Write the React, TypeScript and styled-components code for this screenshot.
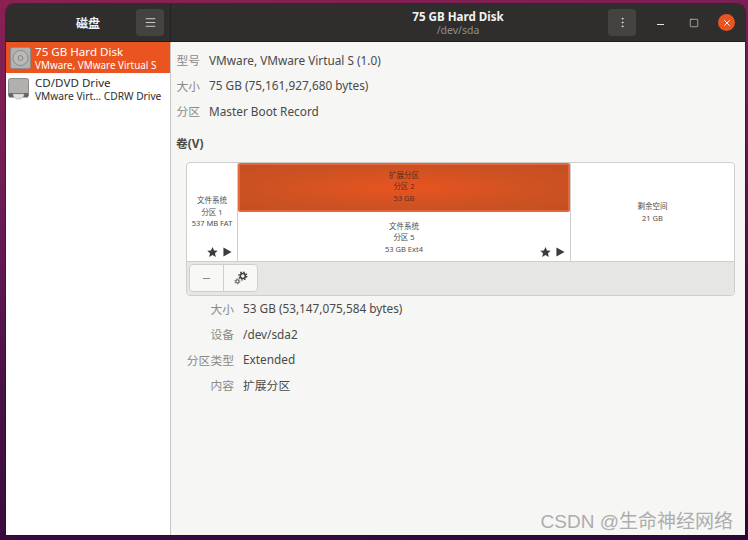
import styled, { createGlobalStyle } from "styled-components";
import { Menu, MoreVertical, Minus, Square, X } from "lucide-react";

const GlobalStyle = createGlobalStyle`
  html, body {
    margin: 0;
    padding: 0;
    height: 100%;
  }
  body {
    width: 748px;
    height: 540px;
    overflow: hidden;
    font-family: "Noto Sans", "Noto Sans CJK SC", sans-serif;
    background: linear-gradient(172deg, #8a2152 0%, #6e1c55 30%, #4a1048 60%, #2c0838 100%);
  }
`;

const Desktop = styled.div`
  position: relative;
  box-sizing: border-box;
  width: 748px;
  height: 540px;
  padding: 4px 3px 5px 6px;
`;

const Window = styled.div`
  width: 100%;
  height: 100%;
  display: flex;
  flex-direction: column;
  border-radius: 8px 8px 0 0;
  overflow: hidden;
  box-shadow: 0 0 0 1px rgba(30, 10, 30, 0.45);
`;

const TitleBar = styled.header`
  flex: 0 0 38px;
  box-sizing: border-box;
  display: flex;
  background: #2f2e2c;
  border-bottom: 1px solid #1c1b1a;
`;

const SideHeader = styled.div`
  flex: 0 0 165px;
  box-sizing: border-box;
  display: grid;
  grid-template-columns: 1fr auto 1fr;
  align-items: center;
  padding-right: 6px;
  padding-left: 6px;
  border-right: 1px solid #242322;
`;

const SideTitle = styled.div`
  grid-column: 2;
  color: #f2f2f2;
  font-size: 12px;
  font-weight: 700;
`;

const HeaderButton = styled.div`
  width: 28px;
  height: 27px;
  display: flex;
  align-items: center;
  justify-content: center;
  border-radius: 4px;
  background: #444341;
  color: #e6e6e6;
`;

const SideMenuButton = styled(HeaderButton)`
  grid-column: 3;
  justify-self: end;
`;

const MainHeader = styled.div`
  flex: 1;
  display: grid;
  grid-template-columns: 1fr auto 1fr;
  align-items: center;
  padding: 0 10px;
`;

const TitleBlock = styled.div`
  grid-column: 2;
  padding-top: 1px;
  display: flex;
  flex-direction: column;
  align-items: center;
`;

const WindowTitle = styled.div`
  color: #f2f2f2;
  font-size: 11.6px;
  line-height: 14px;
  font-weight: 700;
`;

const WindowSubtitle = styled.div`
  color: #8f8e8c;
  font-size: 10.5px;
  line-height: 13px;
`;

const WindowControls = styled.div`
  grid-column: 3;
  justify-self: end;
  display: flex;
  align-items: center;
  gap: 16px;
`;

const ControlIcon = styled.div`
  width: 17px;
  height: 17px;
  display: flex;
  align-items: center;
  justify-content: center;
  color: #e6e6e6;
`;

const CloseButton = styled(ControlIcon)`
  border-radius: 50%;
  background: #e95420;
  color: #fff;
`;

const Body = styled.div`
  flex: 1;
  display: flex;
  min-height: 0;
`;

const Sidebar = styled.nav`
  flex: 0 0 165px;
  box-sizing: border-box;
  background: #fff;
  border-right: 1px solid #c8c6c4;
`;

const DriveRow = styled.div<{ $selected?: boolean }>`
  height: 31px;
  display: flex;
  align-items: center;
  gap: ${(p) => (p.$selected ? "4px" : "6px")};
  padding-left: ${(p) => (p.$selected ? "4px" : "2px")};
  background: ${(p) => (p.$selected ? "#e95420" : "#fff")};
  color: ${(p) => (p.$selected ? "#fff" : "#2d2d2d")};
`;

const DriveText = styled.div`
  min-width: 0;
  white-space: nowrap;
  padding-top: 1px;
`;

const DriveName = styled.div`
  font-size: 11.6px;
  line-height: 14px;
`;

const DriveInfo = styled.div<{ $selected?: boolean }>`
  font-size: ${(p) => (p.$selected ? "9.9px" : "10.2px")};
  line-height: 13px;
`;

const Content = styled.main`
  flex: 1;
  min-width: 0;
  display: flex;
  flex-direction: column;
  background: #f6f6f5;
  color: #3d3d3d;
  padding: 5px 10px 0 5px;
`;

const InfoGrid = styled.dl<{ $labelWidth: number; $indent?: number }>`
  margin: 0;
  margin-left: ${(p) => p.$indent ?? 0}px;
  display: grid;
  grid-template-columns: ${(p) => p.$labelWidth}px 1fr;
  column-gap: 9px;
  grid-auto-rows: 25.5px;
  align-items: center;
  font-size: 11.8px;
`;

const InfoLabel = styled.dt`
  margin: 0;
  text-align: right;
  color: #8a8a88;
`;

const InfoValue = styled.dd`
  margin: 0;
  color: #4a4a48;
  white-space: nowrap;
`;

const SectionTitle = styled.h2`
  margin: 9px 0;
  font-size: 11.8px;
  line-height: 20px;
  font-weight: 700;
  color: #4a4a48;
`;

const VolumeBox = styled.section`
  margin-left: 10px;
  height: 134px;
  box-sizing: border-box;
  display: flex;
  flex-direction: column;
  border: 1px solid #cfcecc;
  border-radius: 4px;
  overflow: hidden;
  background: #fff;
`;

const PartitionMap = styled.div`
  flex: 0 0 98px;
  display: flex;
  border-bottom: 1px solid #cfcecc;
`;

const PartitionColumn = styled.div<{ $width?: number; $last?: boolean }>`
  flex: ${(p) => (p.$width ? `0 0 ${p.$width}px` : "1")};
  display: flex;
  flex-direction: column;
  box-sizing: border-box;
  border-right: ${(p) => (p.$last ? "none" : "1px solid #cfcecc")};
`;

const Partition = styled.div`
  position: relative;
  flex: 1;
  display: flex;
  flex-direction: column;
  align-items: center;
  justify-content: center;
  padding-top: 2px;
  font-size: 7.5px;
  line-height: 11.5px;
  color: #4e4e4c;
`;

const ExtendedPartition = styled(Partition)`
  flex: 0 0 49px;
  box-sizing: border-box;
  padding-top: 0;
  color: #5a3020;
  border: 2px solid #e2673b;
  border-radius: 2px;
  background: radial-gradient(ellipse at center, #e95420 0%, #cf5222 55%, #c44f22 100%);
`;

const LowerPartition = styled(Partition)`
  padding-top: 4px;
`;

const Flags = styled.div`
  position: absolute;
  right: 5px;
  bottom: 4px;
  display: flex;
  align-items: center;
  gap: 5px;
  color: #3c3c3c;
`;

const Toolbar = styled.div`
  flex: 1;
  display: flex;
  align-items: center;
  padding-left: 2px;
  background: #e6e6e5;
`;

const ToolGroup = styled.div`
  display: flex;
  height: 28px;
  box-sizing: border-box;
  border: 1px solid #cfcecc;
  border-radius: 4px;
  background: #f8f8f7;
`;

const ToolButton = styled.div<{ $divided?: boolean }>`
  width: 33px;
  display: flex;
  align-items: center;
  justify-content: center;
  color: #3f3f3d;
  border-left: ${(p) => (p.$divided ? "1px solid #cfcecc" : "none")};
`;

const Watermark = styled.div`
  position: absolute;
  right: 15px;
  bottom: 7px;
  font-family: "Liberation Sans", "Noto Sans CJK SC", sans-serif;
  font-size: 19px;
  line-height: 22px;
  color: #adadad;
`;

function DiskIcon() {
  return (
    <svg width="21" height="22" viewBox="0 0 21 22">
      <rect x="0.5" y="0.5" width="20" height="21" rx="2" fill="#b4b2b0" stroke="#8e8c8a" />
      <circle cx="10.5" cy="11" r="7.5" fill="#bcbab8" stroke="#8a8886" strokeWidth="1" />
      <circle cx="10.5" cy="11" r="2.4" fill="none" stroke="#858381" strokeWidth="1" />
    </svg>
  );
}

function OpticalIcon() {
  return (
    <svg width="21" height="22" viewBox="0 0 21 22">
      <path d="M2.500 0.500h16a2 2 0 0 1 2 2v14a2 2 0 0 1-2 2h-16a2 2 0 0 1-2-2v-14a2 2 0 0 1 2-2z" fill="#b2b0ae" stroke="#8e8c8a" />
      <rect x="0.500" y="15" width="20" height="4.500" rx="1.500" fill="#666462" />
      <path d="M5 16a5.500 5 0 0 0 11 0z" fill="#e4e2e0" stroke="#bdbbb9" strokeWidth="0.5" />
      <path d="M7.500 20.500h6" stroke="#cfcdcb" strokeWidth="1.500" />
    </svg>
  );
}

function MinimizeLine() {
  return (
    <svg width="7" height="17" viewBox="0 0 7 17">
      <path d="M0 10.500h7" stroke="currentColor" strokeWidth="1.200" />
    </svg>
  );
}

function GearsIcon() {
  return (
    <svg width="14" height="14" viewBox="0 0 14 14" fill="none">
      <circle cx="8.800" cy="5" r="2.500" stroke="#3f3f3d" strokeWidth="1.500" />
      <circle cx="8.800" cy="5" r="3.900" stroke="#3f3f3d" strokeWidth="1.400" strokeDasharray="1.530 1.530" />
      <circle cx="3.400" cy="10.400" r="1.600" stroke="#5a5a58" strokeWidth="1.100" />
      <circle cx="3.400" cy="10.400" r="2.500" stroke="#5a5a58" strokeWidth="0.900" strokeDasharray="1.310 1.310" />
    </svg>
  );
}

function PartitionFlags() {
  return (
    <Flags>
      <svg width="11" height="10" viewBox="0 0 24 23">
        <path d="M12 0l3.600 8 8.400.8-6.300 5.700 1.900 8.500L12 18.500 4.400 23l1.900-8.500L0 8.800 8.400 8z" fill="currentColor" />
      </svg>
      <svg width="9" height="10" viewBox="0 0 10 11">
        <path d="M0.500 0.500L9.500 5.500L0.500 10.500z" fill="currentColor" />
      </svg>
    </Flags>
  );
}

export default function App() {
  return (
    <>
      <GlobalStyle />
      <Desktop>
        <Window>
          <TitleBar>
            <SideHeader>
              <SideTitle>磁盘</SideTitle>
              <SideMenuButton>
                <Menu size={13} strokeWidth={1.5} />
              </SideMenuButton>
            </SideHeader>
            <MainHeader>
              <TitleBlock>
                <WindowTitle>75 GB Hard Disk</WindowTitle>
                <WindowSubtitle>/dev/sda</WindowSubtitle>
              </TitleBlock>
              <WindowControls>
                <HeaderButton>
                  <MoreVertical size={13} strokeWidth={1.5} />
                </HeaderButton>
                <ControlIcon>
                  <MinimizeLine />
                </ControlIcon>
                <ControlIcon>
                  <Square size={10} strokeWidth={1.5} />
                </ControlIcon>
                <CloseButton>
                  <X size={10} strokeWidth={2.2} />
                </CloseButton>
              </WindowControls>
            </MainHeader>
          </TitleBar>
          <Body>
            <Sidebar>
              <DriveRow $selected>
                <DiskIcon />
                <DriveText>
                  <DriveName>75 GB Hard Disk</DriveName>
                  <DriveInfo $selected>VMware, VMware Virtual S</DriveInfo>
                </DriveText>
              </DriveRow>
              <DriveRow>
                <OpticalIcon />
                <DriveText>
                  <DriveName>CD/DVD Drive</DriveName>
                  <DriveInfo>VMware Virt… CDRW Drive</DriveInfo>
                </DriveText>
              </DriveRow>
            </Sidebar>
            <Content>
              <InfoGrid $labelWidth={24}>
                <InfoLabel>型号</InfoLabel>
                <InfoValue>VMware, VMware Virtual S (1.0)</InfoValue>
                <InfoLabel>大小</InfoLabel>
                <InfoValue>75 GB (75,161,927,680 bytes)</InfoValue>
                <InfoLabel>分区</InfoLabel>
                <InfoValue>Master Boot Record</InfoValue>
              </InfoGrid>
              <SectionTitle>卷(V)</SectionTitle>
              <VolumeBox>
                <PartitionMap>
                  <PartitionColumn $width={51}>
                    <Partition>
                      <span>文件系统</span>
                      <span>分区 1</span>
                      <span>537 MB FAT</span>
                      <PartitionFlags />
                    </Partition>
                  </PartitionColumn>
                  <PartitionColumn $width={333}>
                    <ExtendedPartition>
                      <span>扩展分区</span>
                      <span>分区 2</span>
                      <span>53 GB</span>
                    </ExtendedPartition>
                    <LowerPartition>
                      <span>文件系统</span>
                      <span>分区 5</span>
                      <span>53 GB Ext4</span>
                      <PartitionFlags />
                    </LowerPartition>
                  </PartitionColumn>
                  <PartitionColumn $last>
                    <Partition>
                      <span>剩余空间</span>
                      <span>21 GB</span>
                    </Partition>
                  </PartitionColumn>
                </PartitionMap>
                <Toolbar>
                  <ToolGroup>
                    <ToolButton>
                      <Minus size={11} strokeWidth={1.3} />
                    </ToolButton>
                    <ToolButton $divided>
                      <GearsIcon />
                    </ToolButton>
                  </ToolGroup>
                </Toolbar>
              </VolumeBox>
              <InfoGrid $labelWidth={49} $indent={9}>
                <InfoLabel>大小</InfoLabel>
                <InfoValue>53 GB (53,147,075,584 bytes)</InfoValue>
                <InfoLabel>设备</InfoLabel>
                <InfoValue>/dev/sda2</InfoValue>
                <InfoLabel>分区类型</InfoLabel>
                <InfoValue>Extended</InfoValue>
                <InfoLabel>内容</InfoLabel>
                <InfoValue>扩展分区</InfoValue>
              </InfoGrid>
            </Content>
          </Body>
        </Window>
        <Watermark>CSDN @生命神经网络</Watermark>
      </Desktop>
    </>
  );
}
